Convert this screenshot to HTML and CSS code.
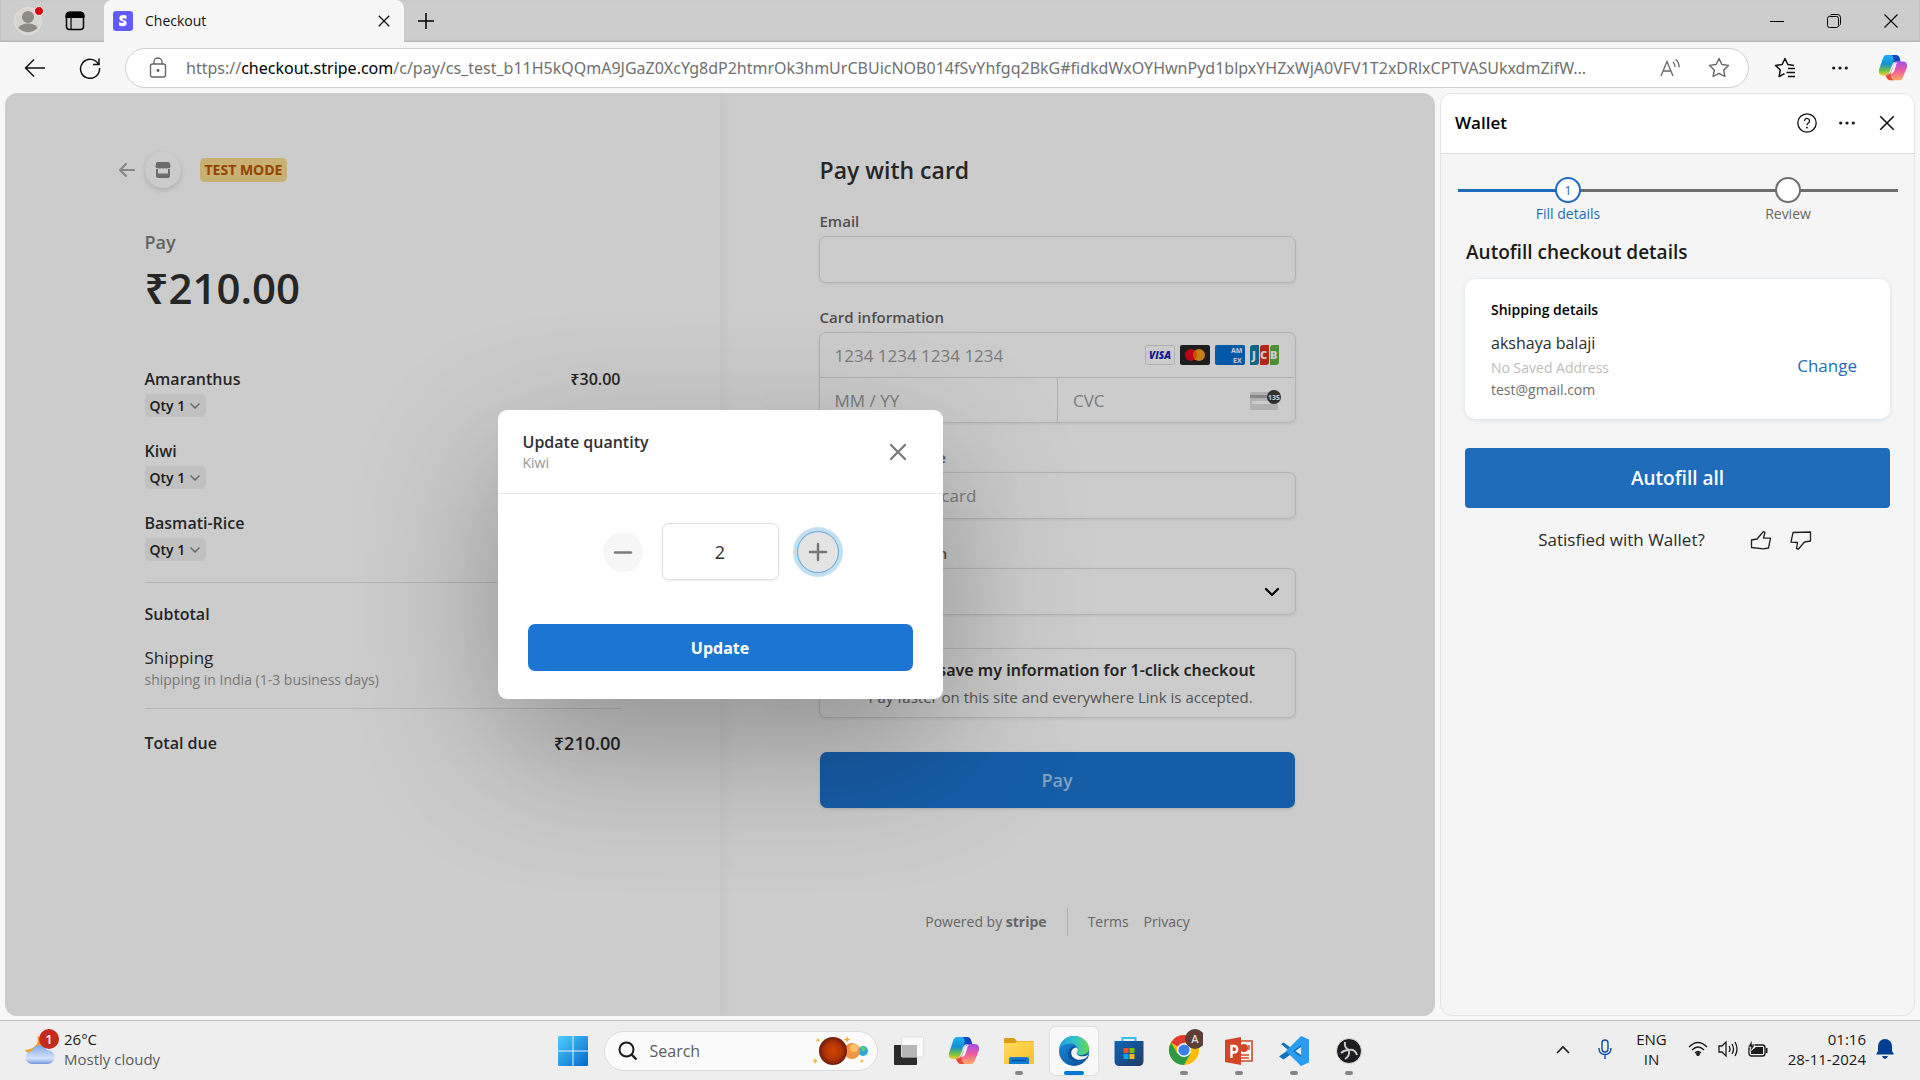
FILE: index.html
```html
<!DOCTYPE html>
<html lang="en">
<head>
<meta charset="utf-8">
<meta name="viewport" content="width=device-width, initial-scale=1">
<title>Checkout</title>
<link rel="stylesheet" href="styles.css">
</head>
<body>
<svg class="defs" aria-hidden="true">
  <defs>
    <linearGradient id="cpA" x1="0" y1="0" x2="0" y2="1"><stop offset="0" stop-color="#1fb0f2"/><stop offset=".45" stop-color="#1391cf"/><stop offset=".75" stop-color="#6cc04a"/><stop offset="1" stop-color="#f3cf22"/></linearGradient>
    <linearGradient id="cpB" x1="0" y1="0" x2="0" y2="1"><stop offset="0" stop-color="#a34fe8"/><stop offset=".5" stop-color="#ee5aa0"/><stop offset="1" stop-color="#ffad62"/></linearGradient>
    <linearGradient id="winG" x1="0" y1="0" x2="1" y2="1"><stop offset="0" stop-color="#4fd0ff"/><stop offset="1" stop-color="#0067c8"/></linearGradient>
    <linearGradient id="edgeA" x1="0" y1="0" x2="1" y2="0"><stop offset="0" stop-color="#1b9de2"/><stop offset=".55" stop-color="#33c3c4"/><stop offset="1" stop-color="#64db4c"/></linearGradient>
    <linearGradient id="edgeB" x1="0" y1="0" x2="1" y2="1"><stop offset="0" stop-color="#1a8fe0"/><stop offset="1" stop-color="#0c4a94"/></linearGradient>
    <linearGradient id="cloud" x1="0" y1="0" x2="0" y2="1"><stop offset="0" stop-color="#7da7ea"/><stop offset=".7" stop-color="#d6e4f9"/><stop offset="1" stop-color="#7398e4"/></linearGradient>
    <linearGradient id="folder" x1="0" y1="0" x2="1" y2="1"><stop offset="0" stop-color="#ffdb62"/><stop offset="1" stop-color="#fcbf24"/></linearGradient>
    <linearGradient id="store" x1="0" y1="0" x2="1" y2="1"><stop offset="0" stop-color="#0c66b8"/><stop offset="1" stop-color="#233a66"/></linearGradient>
    <radialGradient id="mars"><stop offset="0" stop-color="#d34300"/><stop offset=".6" stop-color="#b23404"/><stop offset="1" stop-color="#6d1c08"/></radialGradient>
    <symbol id="copilot" viewBox="0 0 30 28">
      <path d="M8 0h10c2 0 3 1 4 3l1 4h-4c-3 0-4 1-5 4l-3 8c-1 2-2 3-4 3H4c-3 0-5-3-4-6L4 4c1-3 2-4 4-4Z" fill="url(#cpA)"/>
      <path d="M14 0h4c2 0 3 1 4 3l1 4h-4c-2 0-3 0-4 2 1-3 1-7-1-9Z" fill="#1746c4"/>
      <path d="M22 27H12c-2 0-3-1-4-3l-1-3c3 0 5-1 6-4l3-7c1-2 2-3 4-3h6c3 0 5 3 4 6l-4 10c-1 3-2 4-4 4Z" fill="url(#cpB)"/>
      <path d="M16 27h-4c-2 0-3-1-4-3l-1-2c3 0 5-1 6-3-1 3 0 7 3 8Z" fill="#ea4a36"/>
      <path d="M16 10c1-1 2-2 4-2-1 1-2 2-2 4l-2 6c-1 1-2 2-4 2 1-1 1-2 2-4Z" fill="#f4f4f4"/>
    </symbol>
    <symbol id="chev" viewBox="0 0 12 8"><path d="M2 2l4 4 4-4" fill="none" stroke="currentColor" stroke-width="1.5" stroke-linecap="round"/></symbol>
    <symbol id="x" viewBox="0 0 16 16"><path d="M2 2l12 12M14 2L2 14" fill="none" stroke="currentColor" stroke-width="1.5"/></symbol>
    <symbol id="dots" viewBox="0 0 20 20"><g fill="currentColor"><circle cx="3" cy="10" r="1.8"/><circle cx="10" cy="10" r="1.8"/><circle cx="17" cy="10" r="1.8"/></g></symbol>
  </defs>
</svg>

<div class="browser">
  <header class="tabstrip">
    <button class="icon-btn profile" aria-label="Profile">
      <svg width="30" height="30" viewBox="0 0 30 30"><circle cx="14" cy="15" r="13.500" fill="#d6d5d0" stroke="#e2e2e0"/><circle cx="14" cy="11" r="6" fill="#8e8b87"/><path d="M4.500 22c2-6 17-6 19 0a13 13 0 0 1-19 0Z" fill="#8e8b87"/><circle cx="25" cy="5" r="4.500" fill="#d80010" stroke="#eee"/></svg>
    </button>
    <button class="icon-btn" aria-label="Tab actions">
      <svg width="20" height="20" viewBox="0 0 20 20"><rect x="1.500" y="1.500" width="17" height="17" rx="3" fill="none" stroke="#000" stroke-width="1.500"/><path d="M1 5a4 4 0 0 1 4-4h10a4 4 0 0 1 4 4v1.500H1ZM6 6v12" stroke="#000" stroke-width="1.200"/></svg>
    </button>
    <div class="tab">
      <svg width="20" height="20" viewBox="0 0 20 20"><rect width="20" height="20" rx="3" fill="#635bff"/><path d="M13.500 4.700c-1-.5-2-.7-3.200-.7C7.900 4 6.300 5.200 6.300 7.200c0 3.200 4.400 2.700 4.400 4 0 .6-.5.800-1.200.8-1.100 0-2.400-.4-3.400-1v3.600c1.200.5 2.300.7 3.400.7 2.500 0 4.200-1.200 4.200-3.300 0-3.400-4.400-2.800-4.400-4.100 0-.5.400-.7 1-.7 1 0 2.200.3 3.200.8Z" fill="#fff"/></svg>
      <span class="tab-title">Checkout</span>
      <button class="icon-btn small" aria-label="Close tab"><svg width="14" height="14"><use href="#x"/></svg></button>
    </div>
    <button class="icon-btn" aria-label="New tab"><svg width="18" height="18" viewBox="0 0 18 18"><path d="M9 1v16M1 9h16" stroke="#000" stroke-width="1.500"/></svg></button>
    <div class="win-controls">
      <button class="icon-btn" aria-label="Minimize"><svg width="14" height="14" viewBox="0 0 14 14"><path d="M0 7.500h14" stroke="#000"/></svg></button>
      <button class="icon-btn" aria-label="Restore"><svg width="14" height="14" viewBox="0 0 14 14"><path d="M3 1.500Q3.500.5 5 .5h5.500a3 3 0 0 1 3 3v6q0 1.500-1 2" fill="none" stroke="#000"/><rect x=".5" y="2.500" width="11" height="11" rx="2" fill="none" stroke="#000"/></svg></button>
      <button class="icon-btn" aria-label="Close"><svg width="16" height="16" viewBox="0 0 16 16"><path d="M1.500 1.500l13 13M14.500 1.500l-13 13" stroke="#000" stroke-width="1.100"/></svg></button>
    </div>
  </header>

  <div class="toolbar">
    <button class="icon-btn" aria-label="Back"><svg width="22" height="20" viewBox="0 0 22 20"><path d="M10 1.500L1.500 10l8.500 8.500M1.500 10H21" fill="none" stroke="#111" stroke-width="1.500"/></svg></button>
    <button class="icon-btn" aria-label="Refresh"><svg width="22" height="22" viewBox="0 0 22 22"><path d="M19.500 7.500A9.500 9.500 0 1 0 20.500 11M20 1.500v6h-6" fill="none" stroke="#111" stroke-width="1.500"/></svg></button>
    <div class="address">
      <svg width="18" height="22" viewBox="0 0 18 22"><rect x="1.500" y="7" width="15" height="13" rx="2" fill="none" stroke="#666" stroke-width="1.400"/><path d="M5 7V5a4 4 0 0 1 8 0v2" fill="none" stroke="#666" stroke-width="1.400"/><circle cx="9" cy="13.500" r="1.400" fill="#555"/></svg>
      <span class="url">https://<b>checkout.stripe.com</b>/c/pay/cs_test_b11H5kQQmA9JGaZ0XcYg8dP2htmrOk3hmUrCBUicNOB014fSvYhfgq2BkG#fidkdWxOYHwnPyd1blpxYHZxWjA0VFV1T2xDRlxCPTVASUkxdmZifW...</span>
      <button class="icon-btn" aria-label="Read aloud"><svg width="20" height="20" viewBox="0 0 20 20"><path d="M1 18L7 3.500 13 18M3 13h8M13 4q2 2 2 5M15.500 1.500q4 3 3.500 8" fill="none" stroke="#666" stroke-width="1.300"/></svg></button>
      <button class="icon-btn" aria-label="Add to favorites"><svg width="22" height="22" viewBox="0 0 22 22"><path d="M11 1.500l2.900 6 6.600.9-4.800 4.600 1.200 6.500-5.900-3.100-5.900 3.100L6.300 13 1.500 8.400l6.600-.9Z" fill="none" stroke="#666" stroke-width="1.400" stroke-linejoin="round"/></svg></button>
    </div>
    <button class="icon-btn" aria-label="Favorites"><svg width="22" height="22" viewBox="0 0 22 22"><path d="M20 8.400l-6.200-.9L11 1.500 8.100 7.500l-6.600.9L6.300 13l-1.200 6.500L10.500 16.600M14 11.500h7M12.500 15.500H21M14 19.500h7" fill="none" stroke="#111" stroke-width="1.500" stroke-linejoin="round"/></svg></button>
    <button class="icon-btn" aria-label="Settings and more"><svg width="18" height="18"><use href="#dots"/></svg></button>
    <button class="icon-btn" aria-label="Copilot"><svg width="28" height="28"><use href="#copilot"/></svg></button>
  </div>

  <div class="content">
    <main class="page">
      <section class="summary">
        <div class="summary-inner">
          <div class="merchant">
            <a class="back" href="#" aria-label="Back"><svg width="16" height="14" viewBox="0 0 16 14"><path d="M7 1L1 7l6 6M1 7h14" fill="none" stroke="#a8a8a8" stroke-width="2" stroke-linecap="round"/></svg></a>
            <span class="shop"><svg width="16" height="16" viewBox="0 0 16 16"><path d="M1 1.500Q1 0 3 0h10q2 0 2 1.500l.5 3Q15 7 13 6q-1.700 1-3.300 0-1.700 1-3.400 0-1.600 1-3.300 0Q1 7 .5 4.500Z" fill="#868686"/><path d="M2 7v5.500h12V7" fill="none" stroke="#868686" stroke-width="2"/><path d="M1 12h14v2q0 2-2 2H3q-2 0-2-2Z" fill="#868686"/></svg></span>
            <span class="badge">TEST MODE</span>
          </div>
          <p class="pay-label">Pay</p>
          <p class="amount">₹210.00</p>
          <ul class="items">
            <li><div class="row"><span>Amaranthus</span><span>₹30.00</span></div><button class="qty">Qty 1 <svg width="12" height="8"><use href="#chev"/></svg></button></li>
            <li><div class="row"><span>Kiwi</span></div><button class="qty">Qty 1 <svg width="12" height="8"><use href="#chev"/></svg></button></li>
            <li><div class="row"><span>Basmati-Rice</span></div><button class="qty">Qty 1 <svg width="12" height="8"><use href="#chev"/></svg></button></li>
          </ul>
          <div class="block">
            <div class="row">Subtotal</div>
            <div class="row shipping">Shipping</div>
            <p class="note">shipping in India (1-3 business days)</p>
          </div>
          <div class="block total"><div class="row"><span>Total due</span><span class="sum">₹210.00</span></div></div>
        </div>
      </section>

      <section class="payment">
        <form class="payment-inner">
          <h1>Pay with card</h1>
          <div class="field"><label for="email">Email</label><input class="box" id="email" type="email"></div>
          <div class="field">
            <label for="card">Card information</label>
            <div class="card-group">
              <div class="card-number">
                <input id="card" placeholder="1234 1234 1234 1234">
                <span class="brands">
                  <svg width="30" height="20" viewBox="0 0 30 20"><rect x=".5" y=".5" width="29" height="19" rx="2" fill="#fff" stroke="#ddd"/><text x="15" y="14" text-anchor="middle" class="visa">VISA</text></svg>
                  <svg width="30" height="20" viewBox="0 0 30 20"><rect width="30" height="20" rx="2" fill="#252525"/><circle cx="11" cy="10" r="6" fill="#eb001b"/><circle cx="19" cy="10" r="6" fill="#f79e1b"/><path d="M15 5.500a6 6 0 0 1 0 9 6 6 0 0 1 0-9Z" fill="#ff5f00"/></svg>
                  <svg width="30" height="20" viewBox="0 0 30 20"><rect width="30" height="20" rx="2" fill="#016fd0"/><text x="16" y="8" class="amex">AM</text><text x="18" y="18" class="amex">EX</text></svg>
                  <svg width="30" height="20" viewBox="0 0 30 20"><path d="M3 0h6v17q0 3-3 3H0V3q0-3 3-3Z" fill="#0f7fae"/><path d="M13 0h6v17q0 3-3 3h-6V3q0-3 3-3Z" fill="#e02f1b"/><path d="M23 0h6v17q0 3-3 3h-6V3q0-3 3-3Z" fill="#61b344"/><text x="2" y="14" class="jcb">J</text><text x="10" y="14" class="jcb">C</text><text x="20" y="14" class="jcb">B</text></svg>
                </span>
              </div>
              <input placeholder="MM / YY" aria-label="Expiry">
              <div class="cvc"><input placeholder="CVC" aria-label="CVC"><svg width="32" height="22" viewBox="0 0 32 22"><rect x="1" y="3" width="28" height="18" rx="2" fill="#dedede"/><path d="M1 6h28v3H1Z" fill="#a9a9a9"/><path d="M3 12h18v3H3Z" fill="#fff"/><circle cx="25" cy="8" r="7" fill="#3c3c3c"/><text x="25" y="11" text-anchor="middle" class="cvc-num">135</text></svg></div>
            </div>
          </div>
          <div class="field"><label for="name">Cardholder name</label><input class="box" id="name" placeholder="Full name on card"></div>
          <div class="field">
            <label for="country">Country or region</label>
            <div class="select"><select class="box" id="country"><option>India</option></select><svg width="16" height="10" viewBox="0 0 16 10"><path d="M2 2l6 6 6-6" fill="none" stroke="#000" stroke-width="2.200" stroke-linecap="round" stroke-linejoin="round"/></svg></div>
          </div>
          <div class="save">
            <input type="checkbox" id="save">
            <div><label for="save">Securely save my information for 1-click checkout</label><p>Pay faster on this site and everywhere Link is accepted.</p></div>
          </div>
          <button class="pay" type="button">Pay</button>
          <footer class="legal">
            <span>Powered by <b>stripe</b></span>
            <nav><a href="#">Terms</a><a href="#">Privacy</a></nav>
          </footer>
        </form>
      </section>

      <div class="overlay">
        <div class="modal" role="dialog" aria-labelledby="modal-title">
          <header>
            <div><h2 id="modal-title">Update quantity</h2><p>Kiwi</p></div>
            <button class="icon-btn" aria-label="Close dialog"><svg width="18" height="18" viewBox="0 0 18 18"><path d="M2 2l14 14M16 2L2 16" stroke="#7c7c7c" stroke-width="2.400" stroke-linecap="round"/></svg></button>
          </header>
          <div class="stepper-row">
            <button class="round" aria-label="Decrease"><svg width="20" height="20" viewBox="0 0 20 20"><path d="M2 10.500h16" stroke="#7c7c7c" stroke-width="2.400" stroke-linecap="round"/></svg></button>
            <input value="2" aria-label="Quantity">
            <button class="round focus" aria-label="Increase"><svg width="20" height="20" viewBox="0 0 20 20"><path d="M2 10h16M10 2v16" stroke="#747474" stroke-width="2.400" stroke-linecap="round"/></svg></button>
          </div>
          <button class="update">Update</button>
        </div>
      </div>
    </main>

    <aside class="wallet">
      <header>
        <h2>Wallet</h2>
        <button class="icon-btn" aria-label="Help"><svg width="20" height="20" viewBox="0 0 20 20"><circle cx="10" cy="10" r="9.200" fill="none" stroke="#111" stroke-width="1.300"/><path d="M7.500 8a2.500 2.500 0 1 1 3.900 2q-1.400 1-1.400 2.300" fill="none" stroke="#111" stroke-width="1.300"/><circle cx="10" cy="14.600" r=".9" fill="#111"/></svg></button>
        <button class="icon-btn" aria-label="More"><svg width="18" height="18"><use href="#dots"/></svg></button>
        <button class="icon-btn" aria-label="Close wallet"><svg width="18" height="18"><use href="#x"/></svg></button>
      </header>
      <ol class="steps">
        <li class="active"><span class="dot">1</span>Fill details</li>
        <li><span class="dot"></span>Review</li>
      </ol>
      <div class="wallet-body">
        <h3>Autofill checkout details</h3>
        <div class="ship-card">
          <div><h4>Shipping details</h4><p class="name">akshaya balaji</p><p class="none">No Saved Address</p><p class="mail">test@gmail.com</p></div>
          <a href="#">Change</a>
        </div>
        <button class="autofill">Autofill all</button>
        <div class="feedback">
          <span>Satisfied with Wallet?</span>
          <button class="icon-btn" aria-label="Yes"><svg width="22" height="20" viewBox="0 0 22 20"><path d="M1.500 10L7 9l6.500-7.500 1.500 1L13.500 8l7 .2-2 9.800-5 .8-12-1.300Z" fill="none" stroke="#222" stroke-width="1.300" stroke-linejoin="round"/></svg></button>
          <button class="icon-btn" aria-label="No"><svg width="22" height="20" viewBox="0 0 22 20"><path d="M3 2.500l17.500-.5v9l-6 1L8.500 19l-2-.5 1-6-6.500-.3Z" fill="none" stroke="#222" stroke-width="1.300" stroke-linejoin="round"/></svg></button>
        </div>
      </div>
    </aside>
  </div>
</div>

<footer class="taskbar">
  <div class="weather">
    <svg width="34" height="36" viewBox="0 0 34 36"><path d="M12 7c3 7-2 13-12 14 3 5 12 7 17 1s2-13-5-15Z" fill="#f5a11d"/><path d="M7 35a6.500 6.500 0 0 1 0-13 8 8 0 0 1 15-1 7 7 0 0 1 1 14Z" fill="url(#cloud)"/><circle cx="24" cy="10" r="10" fill="#c42b1c"/><text x="24" y="15" text-anchor="middle" class="alert">1</text></svg>
    <div>26°C<br><span>Mostly cloudy</span></div>
  </div>
  <nav class="apps">
    <button class="app" aria-label="Start"><svg width="30" height="30" viewBox="0 0 30 30"><path d="M1 0h13.500v14.500H0V1q0-1 1-1ZM15.500 0H29q1 0 1 1v13.500H15.500ZM0 15.500h14.500V30H1q-1 0-1-1ZM15.500 15.500H30V29q0 1-1 1H15.500Z" fill="url(#winG)"/></svg></button>
    <label class="search">
      <svg width="20" height="20" viewBox="0 0 20 20"><circle cx="8.500" cy="8.500" r="7" fill="none" stroke="#1b1b1b" stroke-width="2"/><path d="M13.500 13.500l5 5" stroke="#1b1b1b" stroke-width="2.400"/></svg>
      <input type="text" placeholder="Search" aria-label="Search">
      <svg width="56" height="30" viewBox="0 0 56 30"><circle cx="50" cy="15" r="5" fill="#2ea6d8"/><path d="M47 11q4-1 6 1-1 4-4 3Z" fill="#52d273"/><circle cx="39" cy="15" r="8" fill="#f29440"/><circle cx="41" cy="12" r="4" fill="#ffc06a"/><circle cx="20" cy="15" r="14" fill="url(#mars)"/><path d="M34 0l1 2.500 2.500 1-2.500 1-1 2.500-1-2.500-2.500-1 2.500-1ZM2 22l1 2 2 1-2 1-1 2-1-2-1-1 1-1ZM5 2l1 1.500L7.500 4 6 5 5 6 4 5 3 4l1-.5ZM49 23l.7 1.500L51 25l-1.300.7L49 27l-.7-1.300L47 25l1.300-.5Z" fill="#ecb737"/></svg>
    </label>
    <button class="app" aria-label="Task view"><svg width="30" height="30" viewBox="0 0 30 30"><rect y="9" width="23" height="20" rx="1" fill="#2c2c2c"/><rect x="7.500" y="1" width="22" height="20" rx="1" fill="#fafafa" stroke="#ddd"/><path d="M8 9h15v12H8Z" fill="#b6b6b6"/></svg></button>
    <button class="app" aria-label="Copilot"><svg width="30" height="28"><use href="#copilot"/></svg></button>
    <button class="app open" aria-label="File Explorer"><svg width="30" height="28" viewBox="0 0 30 28"><path d="M0 2q0-1 1-1h9l3 3h16q1 0 1 1v5H0Z" fill="#dc9c0a"/><path d="M0 6h11l2-1.500h17V27H0Z" fill="url(#folder)"/><path d="M5 27v-5q0-2 2-2h16q2 0 2 2v5Z" fill="#0f7bd4"/><path d="M8 23.500h14" stroke="#0a4f91" stroke-width="1.500"/></svg></button>
    <button class="app open current" aria-label="Edge"><svg width="30" height="30" viewBox="0 0 30 30"><circle cx="15" cy="15" r="15" fill="url(#edgeB)"/><path d="M0 14C1 5 7 0 15 0s15 6 15 12c0 5-4 7-8 7-3 0-5-1-4-3 1-1 1-2 1-3-1-4-5-6-9-5-5 0-9 3-10 6Z" fill="url(#edgeA)"/><path d="M9 19c0-5 3-9 7-8 2 1 3 3 2 5-2 3 1 5 5 5 3 0 5-1 7-3l-1 4c-3 2-5 3-9 3-6 0-11-2-11-6Z" fill="#0c4f9c"/><path d="M17.500 11.500c-4 0-6 4-5 7 1 4 6 6 10 5 2 0 4-1 5.500-2.500l1.500-2.500c-3 2-7 2.500-10 1-2.500-1.500-2-3-1-4.500 1-1 0-2.500-1-3.500Z" fill="#f5f5f5"/></svg></button>
    <button class="app" aria-label="Microsoft Store"><svg width="30" height="30" viewBox="0 0 30 30"><path d="M8.500 6V2h13v4" fill="none" stroke="#39bdf0" stroke-width="2.200"/><path d="M.5 5h29v20q0 5-5 5h-19q-5 0-5-5Z" fill="url(#store)"/><path d="M9.500 12h5v5h-5Z" fill="#f35325"/><path d="M15.500 12h5v5h-5Z" fill="#81bc06"/><path d="M9.500 18h5v5h-5Z" fill="#05a6f0"/><path d="M15.500 18h5v5h-5Z" fill="#ffba08"/></svg></button>
    <button class="app open" aria-label="Chrome"><svg class="chrome" width="38" height="38" viewBox="-4 0 38 38"><circle cx="15" cy="21" r="15" fill="#fbbc05"/><path d="M15 21L2 13.500A15 15 0 0 1 28 13.500H15Z" fill="#e23a2c"/><path d="M15 21l6.500 3.700L15 36A15 15 0 0 1 2 13.500l6.500 11.200Z" fill="#2b9a46"/><circle cx="15" cy="21" r="7" fill="#fff"/><circle cx="15" cy="21" r="5.600" fill="#3b7ded"/><circle cx="26" cy="10" r="10" fill="#5d4037"/><text x="26" y="14" text-anchor="middle" class="avatar">A</text></svg></button>
    <button class="app open" aria-label="PowerPoint"><svg width="28" height="28" viewBox="0 0 28 28"><path d="M15 4h12v20H15Z" fill="#fff" stroke="#d24625" stroke-width="1.600"/><circle cx="19" cy="11" r="4" fill="#d24625"/><path d="M16 18h8M16 21h8M24 8v5" stroke="#d24625" stroke-width="1.500"/><path d="M0 3l16-3v28L0 25Z" fill="#d24625"/><path d="M6.500 21V9h2.500a3 3 0 0 1 0 6.500H6.500" fill="none" stroke="#fff" stroke-width="2.400"/></svg></button>
    <button class="app open" aria-label="Visual Studio Code"><svg width="30" height="30" viewBox="0 0 30 30"><path d="M2 8l20 17v-6L4.500 6.500 0 9.500ZM0 20.500l4.500 3L22 11V5Z" fill="#0a73c0"/><path d="M22 0l8 3.500v23L22 30 9 17l-2-2 2-2Zm0 9l-8 6 8 6Z" fill="#2a9df0" fill-rule="evenodd"/></svg></button>
    <button class="app open" aria-label="OBS Studio"><svg width="26" height="26" viewBox="0 0 26 26"><circle cx="13" cy="13" r="12.500" fill="#1d1c20" stroke="#ddd"/><path d="M9 4q-1 6 4 8 6-1 8 5M13 12q1 6-4 9M5 15q3-3 8-3" fill="none" stroke="#c9c8cc" stroke-width="2"/></svg></button>
  </nav>
  <div class="tray">
    <button class="icon-btn" aria-label="Show hidden icons"><svg width="14" height="9" viewBox="0 0 14 9"><path d="M1 8l6-6 6 6" fill="none" stroke="#1b1b1b" stroke-width="1.600"/></svg></button>
    <button class="icon-btn" aria-label="Microphone"><svg width="14" height="20" viewBox="0 0 14 20"><rect x="4" y="1" width="6" height="12" rx="3" fill="none" stroke="#0f4fa8" stroke-width="1.400"/><path d="M1 9q0 6.500 6 6.500T13 9M7 15.500V20" fill="none" stroke="#0f4fa8" stroke-width="1.400"/></svg></button>
    <div class="lang">ENG<br>IN</div>
    <svg width="20" height="16" viewBox="0 0 20 16"><path d="M1 6q9-9 18 0M4 9q6-6 12 0M7 12q3-3 6 0" fill="none" stroke="#1b1b1b" stroke-width="1.400"/><circle cx="10" cy="13" r="2" fill="#1b1b1b"/></svg>
    <svg width="20" height="18" viewBox="0 0 20 18"><path d="M1 6h3l4-4v14l-4-4H1ZM11 6q2 3 0 6M14 4q3 5 0 10M17 2q4 7 0 14" fill="none" stroke="#1b1b1b" stroke-width="1.300"/></svg>
    <svg width="20" height="16" viewBox="0 0 20 16"><rect x="1" y="4" width="16" height="11" rx="2.500" fill="none" stroke="#1b1b1b" stroke-width="1.400"/><path d="M8 6h7v7H3v-3ZM18 7h1.500v5H18Z" fill="#1b1b1b"/><path d="M4-1L0 6h3l-1 5 5-7H4Z" fill="#1b1b1b" stroke="#eee" stroke-width=".6"/></svg>
    <div class="clock">01:16<br>28-11-2024</div>
    <svg width="18" height="20" viewBox="0 0 18 20"><path d="M9 0a7 7 0 0 1 7 7v5l2 3.500H0L2 12V7a7 7 0 0 1 7-7ZM6 17h6q-1 3-3 3t-3-3Z" fill="#003e92"/></svg>
  </div>
</footer>
</body>
</html>
```
FILE: styles.css
```css
* { box-sizing: border-box; }
body {
  margin: 0;
  min-height: 100vh;
  display: flex;
  flex-direction: column;
  font-family: "Open Sans", "Noto Sans", sans-serif;
  font-size: 16px;
  line-height: 24px;
  color: #1a1a1a;
  background: #f7f7f7;
}
h1, h2, h3, h4, p, ul, ol { margin: 0; padding: 0; }
ul, ol { list-style: none; }
button, input, select { font: inherit; color: inherit; }
button { border: 0; background: none; padding: 0; }
a { color: inherit; text-decoration: none; }
svg { display: block; flex: none; }
.defs { position: absolute; width: 0; height: 0; }
.browser { flex: 1; display: flex; flex-direction: column; }
.icon-btn { width: 32px; height: 32px; flex: none; display: flex; align-items: center; justify-content: center; }
.icon-btn.small { width: 24px; height: 24px; }

/* Tab strip */
.tabstrip { height: 42px; display: flex; align-items: center; background: #cdcdcd; padding-left: 13px; box-shadow: inset 0 -1px 2px rgba(0,0,0,.15); }
.tabstrip .profile { margin-right: 14px; }
.tab { align-self: stretch; width: 300px; margin: 0 6px 0 13px; padding: 0 8px 0 9px; display: flex; align-items: center; gap: 12px; background: #f7f7f7; border-radius: 8px 8px 0 0; font-size: 14px; color: #111; }
.tab-title { flex: 1; }
.win-controls { margin-left: auto; display: flex; gap: 25px; padding-right: 13px; }

/* Toolbar */
.toolbar { height: 51px; display: flex; align-items: center; padding: 0 11px 0 19px; }
.toolbar > .icon-btn:nth-child(2) { margin: 0 19px 0 23px; }
.address { flex: 1; min-width: 0; height: 40px; margin-right: 20px; padding: 0 13px 0 23px; display: flex; align-items: center; background: #fff; border: 1px solid #cfcfcf; border-radius: 20px; font-family: "Noto Sans", sans-serif; font-size: 16px; color: #707070; }
.address .url { flex: 1; min-width: 0; margin: 0 4px 0 19px; white-space: nowrap; overflow: hidden; text-overflow: ellipsis; }
.address b { font-weight: 400; color: #000; }
.address .icon-btn + .icon-btn { margin-left: 17px; }
.address + .icon-btn { margin-right: 23px; }
.toolbar > .icon-btn:last-child { margin-left: 21px; }

.content { flex: 1; display: flex; gap: 5px; padding: 0 5px 4px; }

/* Checkout page */
.page { position: relative; flex: 1; display: flex; background: #fff; border-radius: 12px; overflow: hidden; }
.summary, .payment { flex: 1; }
.summary { display: flex; justify-content: flex-end; padding: 59px 99px 0 0; box-shadow: 2px 0 15px rgba(0,0,0,.04); }
.payment { padding: 61px 0 76px 100px; }
.summary-inner { width: 476px; }
.payment-inner { width: 475px; }
.row { display: flex; justify-content: space-between; font-weight: 600; color: #303030; }
.merchant { height: 36px; display: flex; align-items: center; margin-left: -26px; }
.merchant .back { width: 26px; }
.shop { width: 36px; height: 36px; display: flex; align-items: center; justify-content: center; border-radius: 50%; background: #fff; box-shadow: 0 2px 5px rgba(0,0,0,.16); }
.badge { margin-left: 19px; padding: 0 5px; border-radius: 5px; background: #fbdb8f; color: #b85500; font-size: 14px; font-weight: 700; }
.pay-label { margin-top: 42px; font-size: 18px; font-weight: 600; color: #7c7c7c; }
.amount { margin: 6px 0 51px; font-size: 42px; line-height: 56px; font-weight: 600; color: #303030; }
.items { display: grid; gap: 22px; }
.qty { margin-top: 3px; height: 23px; padding: 0 5px; display: flex; align-items: center; gap: 4px; border-radius: 5px; background: #f2f2f2; font-size: 14px; font-weight: 600; color: #222; }
.qty svg { color: #808080; }
.block { margin-top: 21px; padding-top: 19px; border-top: 1px solid #e2e2e2; }
.block .shipping { margin-top: 20px; font-size: 17px; font-weight: 400; }
.note { font-size: 14px; line-height: 20px; color: #969696; }
.block.total { margin-top: 18px; padding-top: 22px; }
.sum { font-size: 18px; }

h1 { font-size: 23px; line-height: 32px; font-weight: 600; color: #303030; margin-bottom: 25px; }
.field { margin-bottom: 24px; }
.field label { display: block; margin-bottom: 5px; font-size: 15px; line-height: 20px; font-weight: 600; color: #646464; }
.box, .card-group, .save { width: calc(100% + 2px); margin-left: -1px; border: 1px solid #e0e0e0; border-radius: 7px; background: #fff; box-shadow: 0 1px 3px rgba(0,0,0,.08); }
.box { display: block; height: 47px; padding: 0 15px; }
.field input { font-size: 17px; }
input::placeholder { color: #9c9c9c; opacity: 1; }
.card-group { display: grid; grid-template-columns: repeat(2, minmax(0, 1fr)); overflow: hidden; }
.card-group input { border: 0; height: 44px; padding: 0 15px; min-width: 0; background: none; }
.card-number { grid-column: 1 / -1; display: flex; align-items: center; border-bottom: 1px solid #dcdcdc; padding-right: 15px; }
.card-number input { flex: 1; }
.brands { display: flex; gap: 5px; }
.cvc { display: flex; align-items: center; border-left: 1px solid #dcdcdc; padding-right: 14px; }
.cvc input { flex: 1; }
.visa { font: italic 800 10px "Open Sans", sans-serif; fill: #1a1fb8; }
.amex { font: 700 7px "Open Sans", sans-serif; fill: #fff; }
.jcb { font: 800 11px "Open Sans", sans-serif; fill: #fff; }
.cvc-num { font: 700 7px "Open Sans", sans-serif; fill: #fff; }
.select { display: grid; align-items: center; }
.select select, .select svg { grid-area: 1 / 1; }
.select select { appearance: none; }
.select svg { justify-self: end; margin-right: 15px; }
.save { margin-top: 33px; padding: 9px 15px 8px; display: flex; gap: 16px; }
.save input { width: 18px; height: 18px; margin: 4px 0 0; }
.save label { font-family: "Noto Sans", sans-serif; font-weight: 600; color: #303030; }
.save p { margin-top: 3px; font-size: 15px; color: #6a6a6a; }
.pay { width: 100%; height: 56px; margin-top: 34px; border-radius: 7px; background: #1c75d3; color: #a4c8ee; font-size: 18px; font-weight: 600; box-shadow: 0 1px 3px rgba(0,0,0,.15); }
.legal { margin-top: 100px; padding-left: 1px; display: flex; justify-content: center; font-size: 14px; line-height: 28px; color: #808080; }
.legal nav { display: flex; gap: 15px; margin-left: 20px; padding-left: 20px; border-left: 1px solid #dcdcdc; }

/* Dialog */
.overlay { position: absolute; inset: 0; display: flex; align-items: center; justify-content: center; background: rgba(0,0,0,.2); }
.modal { width: 445px; background: #fff; border-radius: 9px; box-shadow: 0 48px 140px rgba(0,0,0,.3); }
.modal header { height: 84px; padding: 0 29px 0 25px; display: flex; align-items: center; justify-content: space-between; border-bottom: 1px solid #e6e6e6; }
.modal h2 { font-size: 16px; line-height: 24px; font-weight: 600; color: #303030; }
.modal header p { margin-bottom: 2px; font-size: 14px; line-height: 18px; color: #969696; }
.stepper-row { display: flex; align-items: center; justify-content: center; gap: 19px; padding: 29px 0 44px; }
.stepper-row input { width: 117px; height: 57px; border: 1px solid #e0e0e0; border-radius: 7px; text-align: center; font-size: 18px; color: #303030; box-shadow: 0 1px 3px rgba(0,0,0,.08); }
.round { width: 40px; height: 40px; border-radius: 50%; background: #f7f7f7; display: flex; align-items: center; justify-content: center; }
.round.focus { background: #e4e4e4; box-shadow: 0 0 0 1px #5fa9da, 0 0 0 5px #c3dff0; }
.update { display: block; width: 385px; height: 47px; margin: 0 auto 28px; border-radius: 7px; background: #1c75d3; color: #fff; font-weight: 700; }

/* Wallet side pane */
.wallet { width: 475px; background: #f5f5f5; border: 1px solid #e3e3e3; border-radius: 12px; overflow: hidden; }
.wallet header { height: 60px; display: flex; align-items: center; gap: 8px; padding: 0 11px 1px 14px; background: #fff; border-bottom: 1px solid #dcdcdc; }
.wallet h2 { flex: 1; font-size: 17px; font-weight: 600; color: #000; }
.steps { display: flex; margin: 23px 16px 0 17px; background: linear-gradient(#6f6f6f, #6f6f6f) 0 12px / 100% 3px no-repeat; }
.steps li { flex: 1; display: flex; flex-direction: column; align-items: center; font-size: 14px; line-height: 22px; color: #666; }
.dot { width: 26px; height: 26px; border: 2px solid #6f6f6f; border-radius: 50%; background: #fff; font-size: 13px; text-align: center; }
.steps .active { color: #1f6cbb; background: linear-gradient(#1f6cbb, #1f6cbb) 0 12px / 50% 3px no-repeat; }
.active .dot { border-color: #1f6cbb; }
.wallet-body { padding: 15px 24px 0; }
.wallet h3 { padding-left: 1px; font-size: 19px; line-height: 24px; font-weight: 600; color: #1b1b1b; margin-bottom: 15px; }
.ship-card { display: flex; align-items: center; justify-content: space-between; padding: 19px 33px 18px 26px; background: #fff; border-radius: 10px; box-shadow: 0 1px 4px rgba(31,108,187,.16); }
.ship-card h4 { font-size: 14px; line-height: 24px; font-weight: 600; color: #000; }
.ship-card .name { line-height: 24px; margin: 9px 0 2px; color: #2b2b2b; }
.ship-card .none, .ship-card .mail { font-size: 14px; line-height: 22px; color: #bdbdbd; }
.ship-card .mail { color: #6f6f6f; }
.ship-card a { margin-top: 32px; font-size: 17px; color: #1f6cbb; }
.autofill { width: 100%; height: 60px; margin-top: 29px; border-radius: 4px; background: #1f6cbb; color: #fff; font-size: 19px; font-weight: 600; }
.feedback { display: flex; align-items: center; justify-content: center; gap: 8px; margin-top: 16px; }
.feedback span { margin-right: 32px; font-size: 17px; color: #2b2b2b; }

/* Taskbar */
.taskbar { height: 60px; display: grid; grid-template-columns: 1fr auto 1fr; align-items: center; background: #eee; border-top: 1px solid #bfbfbf; font-size: 15px; line-height: 20px; }
.weather { display: flex; align-items: center; gap: 5px; padding-left: 25px; padding-bottom: 4px; }
.weather svg { margin-bottom: 4px; }
.weather span { color: #5c5c5c; }
.alert { font: 600 13px "Open Sans", sans-serif; fill: #fff; }
.avatar { font: 600 11px "Open Sans", sans-serif; fill: #ddd; }
.apps { display: flex; align-items: center; gap: 7px; padding-left: 1px; }
.app { position: relative; width: 48px; height: 48px; display: flex; align-items: center; justify-content: center; border-radius: 5px; }
.chrome { margin-bottom: 6px; }
.current { background: #f8f8f8; box-shadow: 0 0 2px rgba(0,0,0,.2); }
.open::after { content: ""; position: absolute; bottom: 0; width: 8px; height: 4px; border-radius: 2px; background: #858585; }
.current::after { width: 20px; background: #0078d4; }
.search { width: 274px; height: 40px; padding: 0 8px 0 13px; display: flex; align-items: center; gap: 12px; border: 1px solid #dcdcdc; border-radius: 20px; background: #fbfbfb; }
.search input { flex: 1; min-width: 0; border: 0; padding: 0; background: none; font-size: 16px; }
.search input::placeholder { color: #5c5c5c; }
.tray { display: flex; align-items: center; justify-content: flex-end; gap: 10px; padding: 0 26px 3px 0; }
.lang { margin: 0 11px 0 5px; text-align: center; }
.clock { margin-left: 10px; text-align: right; }
```
